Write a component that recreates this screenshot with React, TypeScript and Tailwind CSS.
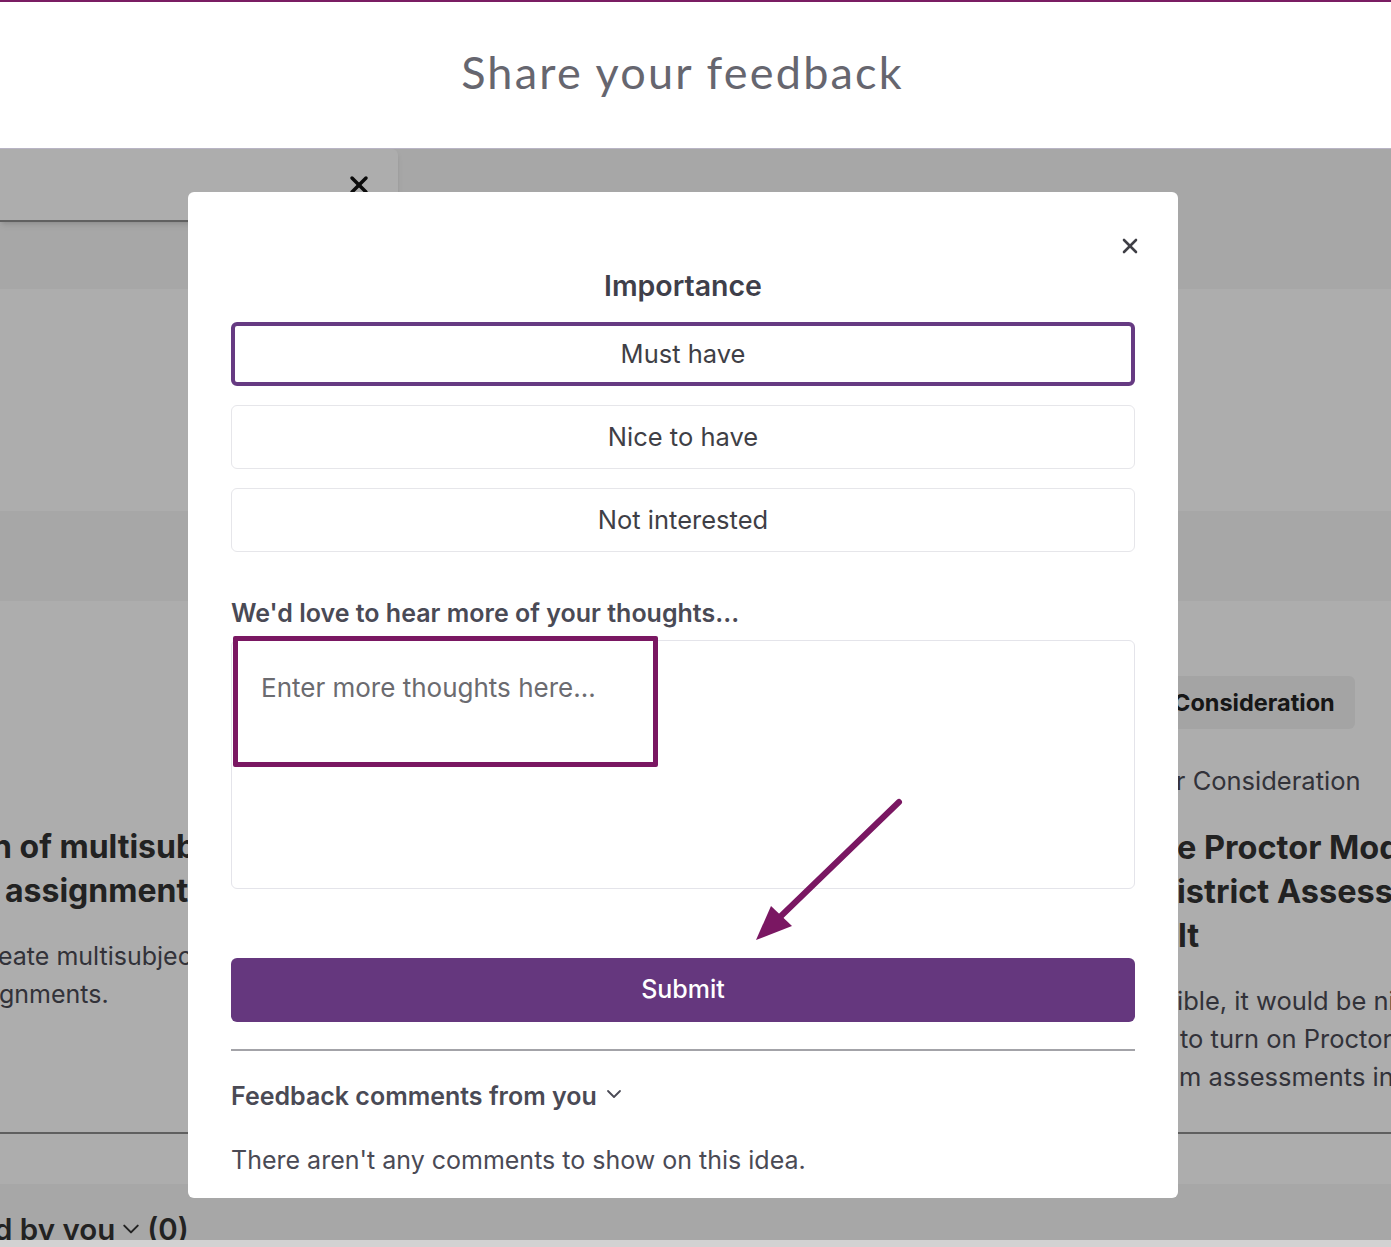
import React from 'react';
import { X } from 'lucide-react';

function Chevron({ className }: { className?: string }) {
  return (
    <svg viewBox="0 0 16 10" className={className} fill="none" stroke="currentColor" strokeWidth="1.8" strokeLinecap="round" strokeLinejoin="round">
      <polyline points="2,2 8,8 14,2" />
    </svg>
  );
}

function Arrow() {
  return (
    <svg className="absolute left-[552px] top-[598px] w-[170px] h-[160px]" viewBox="0 0 170 160">
      <line x1="159" y1="12" x2="40" y2="127" stroke="#7a1762" strokeWidth="6" strokeLinecap="round" />
      <polygon points="16,150 31,116 52,136" fill="#7a1762" />
    </svg>
  );
}

function ImportanceOption({ label, selected }: { label: string; selected?: boolean }) {
  return (
    <button
      className={
        selected
          ? 'h-[64px] w-full rounded-md border-4 border-[#663a82] bg-white text-[25.5px] text-[#3f3f46]'
          : 'h-[64px] w-full rounded-md border border-[#e6e6ea] bg-white text-[25.5px] text-[#3f3f46]'
      }
    >
      {label}
    </button>
  );
}

function FeedbackModal() {
  return (
    <div className="absolute left-[188px] top-[43px] w-[990px] h-[1006px] rounded-md bg-white px-[43px] flex flex-col">
      <button className="absolute right-[36px] top-[42px] text-[#3f3f46]">
        <X size={24} strokeWidth={2.6} />
      </button>

      <h2 className="mt-[78px] h-[32px] leading-[32px] text-center text-[28.5px] font-semibold text-[#3f3f4a]">Importance</h2>

      <div className="mt-[20px] flex flex-col gap-[19px]">
        <ImportanceOption label="Must have" selected />
        <ImportanceOption label="Nice to have" />
        <ImportanceOption label="Not interested" />
      </div>

      <label className="mt-[45px] h-[32px] leading-[32px] text-[25px] font-semibold text-[#4a4a55]">
        We'd love to hear more of your thoughts...
      </label>

      <div className="relative mt-[11px]">
        <textarea
          className="block h-[249px] w-full resize-none rounded-md border border-[#e4e4ea] px-[29px] pt-[31px] text-[26px] leading-[32px] text-[#3f3f46] placeholder:text-[#6b6b70] outline-none"
          placeholder="Enter more thoughts here..."
        />
        <div className="absolute left-[2px] top-[-4px] w-[425px] h-[131px] border-[5px] border-[#7a1762] rounded-[2px]" />
      </div>

      <button className="mt-[69px] h-[64px] w-full rounded-md bg-[#65377e] text-[25px] font-medium text-white">Submit</button>

      <div className="mt-[27px] h-[2px] bg-[#a3a3a8]" />

      <div className="mt-[29px] flex items-center gap-[9px] h-[32px]">
        <span className="text-[25px] font-semibold text-[#4a4a55] leading-[32px]">Feedback comments from you</span>
        <Chevron className="w-[16px] h-[10px] text-[#4a4a55] -mt-[4px]" />
      </div>

      <p className="mt-[32px] h-[32px] leading-[32px] text-[25px] text-[#4a4a55]">There aren't any comments to show on this idea.</p>

      <Arrow />
    </div>
  );
}

function PageBehind() {
  return (
    <div className="flex flex-col">
      <div className="h-[140px] bg-[#f6f6f6]">
        <div className="relative h-[73px] w-[398px] rounded-tr-md bg-white border-b-2 border-[#909090] shadow-md">
          <X className="absolute left-[345px] top-[22px] text-[#111]" size={28} strokeWidth={3} />
        </div>
      </div>
      <div className="h-[222px] bg-white" />
      <div className="h-[90px] bg-[#f6f6f6]" />
      <div className="h-[533px] bg-white border-b-2 border-[#8c8c8c] flex">
        <div className="w-[188px] overflow-hidden pt-[224px] text-[#333]">
          <div className="-ml-[8px] whitespace-nowrap text-[32px] font-bold leading-[44px]">n of multisubject</div>
          <div className="ml-[5px] whitespace-nowrap text-[32px] font-bold leading-[44px]">assignment</div>
          <div className="mt-[24px] -ml-[2px] whitespace-nowrap text-[25px] leading-[38px] text-[#4b4b55]">eate multisubject</div>
          <div className="-ml-[1px] whitespace-nowrap text-[25px] leading-[38px] text-[#4b4b55]">gnments.</div>
        </div>
        <div className="ml-[972px] w-[231px] overflow-hidden pt-[75px] text-[#333]">
          <div className="h-[53px] w-[195px] rounded-md bg-[#f2f2f2] pl-[13px] flex items-center whitespace-nowrap text-[23.5px] font-bold text-[#222]">
            Consideration
          </div>
          <div className="mt-[36px] pl-[1px] whitespace-nowrap text-[25.5px] leading-[32px] text-[#4b4b55]">er Consideration</div>
          <div className="mt-[29px] pl-[17px] whitespace-nowrap text-[32.5px] font-bold leading-[44px]">e Proctor Mode</div>
          <div className="pl-[17px] whitespace-nowrap text-[32.5px] font-bold leading-[44px]">istrict Assessments</div>
          <div className="pl-[18px] whitespace-nowrap text-[32.5px] font-bold leading-[44px]">lt</div>
          <div className="mt-[24px] pl-[17px] whitespace-nowrap text-[25.5px] leading-[38px] text-[#4b4b55]">ible, it would be nice</div>
          <div className="pl-[20px] whitespace-nowrap text-[25.5px] leading-[38px] text-[#4b4b55]">to turn on Proctor</div>
          <div className="pl-[19px] whitespace-nowrap text-[25.5px] leading-[38px] text-[#4b4b55]">m assessments in</div>
        </div>
      </div>
      <div className="h-[50px] bg-white" />
      <div className="h-[57px] bg-[#f6f6f6] overflow-hidden">
        <div className="mt-[23px] -ml-[6px] flex items-center gap-[7px] whitespace-nowrap text-[29.5px] font-semibold text-[#333]">
          <span>d by you</span>
          <Chevron className="w-[18px] h-[12px] text-[#333]" />
          <span>(0)</span>
        </div>
      </div>
    </div>
  );
}

export default function App() {
  return (
    <div className="w-[1391px] h-[1247px] overflow-hidden bg-white font-['Inter','Liberation_Sans',sans-serif]">
      <header className="h-[148px] border-t-2 border-[#7a1d63] flex items-center justify-center">
        <h1 className="-mt-[4px] -ml-[26px] text-[45px] font-normal tracking-[2.2px] text-[#66666f] font-['Lato','Inter',sans-serif]">Share your feedback</h1>
      </header>
      <main className="relative h-[1092px] overflow-hidden border-t border-[#b8b4c4]">
        <PageBehind />
        <div className="absolute inset-0 bg-black/[0.32]" />
        <FeedbackModal />
      </main>
      <div className="h-[7px] bg-[#d2d2d2]" />
    </div>
  );
}
